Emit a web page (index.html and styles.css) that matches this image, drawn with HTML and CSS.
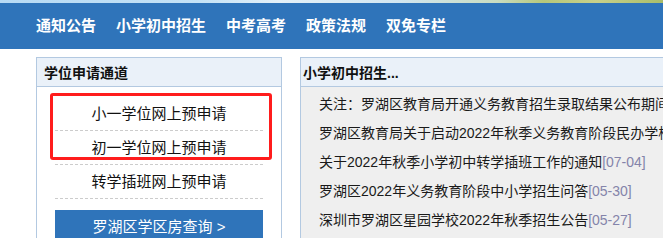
FILE: index.html
```html
<!DOCTYPE html>
<html lang="zh-CN">
<head>
<meta charset="utf-8">
<title>学位申请</title>
<link rel="stylesheet" href="styles.css">
</head>
<body>
<div class="banner"></div>
<nav class="nav">
  <a class="nav-item">通知公告</a>
  <a class="nav-item">小学初中招生</a>
  <a class="nav-item">中考高考</a>
  <a class="nav-item">政策法规</a>
  <a class="nav-item">双免专栏</a>
</nav>
<main class="content">
  <section class="panel panel-left">
    <h2 class="panel-head">学位申请通道</h2>
    <div class="panel-body left-body">
      <a class="apply-row">小一学位网上预申请</a>
      <a class="apply-row">初一学位网上预申请</a>
      <a class="apply-row">转学插班网上预申请</a>
      <a class="house-btn">罗湖区学区房查询 &gt;</a>
      <div class="highlight"></div>
    </div>
  </section>
  <section class="panel panel-right">
    <h2 class="panel-head">小学初中招生...</h2>
    <ul class="panel-body news">
      <li>关注：罗湖区教育局开通义务教育招生录取结果公布期间咨询电话<span class="date">[07-20]</span></li>
      <li>罗湖区教育局关于启动2022年秋季义务教育阶段民办学校学位补贴申请的通知<span class="date">[07-08]</span></li>
      <li>关于2022年秋季小学初中转学插班工作的通知<span class="date">[07-04]</span></li>
      <li>罗湖区2022年义务教育阶段中小学招生问答<span class="date">[05-30]</span></li>
      <li>深圳市罗湖区星园学校2022年秋季招生公告<span class="date">[05-27]</span></li>
    </ul>
  </section>
</main>
</body>
</html>
```
FILE: styles.css
```css
html, body {
  margin: 0;
  padding: 0;
  background: #ffffff;
  overflow: hidden;
  font-family: "Liberation Sans", "Noto Sans CJK SC", sans-serif;
}

.banner {
  height: 3px;
  background: linear-gradient(90deg, #b7daf4 0%, #c4e2f6 30%, #e3f0f8 42%, #d2e6f1 60%, #c9dcc0 75%, #b6c77a 82%, #c8d08a 90%, #a9bd6a 100%);
}

.nav {
  height: 46px;
  background: #2f74ba;
  display: flex;
  align-items: center;
  gap: 20px;
  padding-left: 36px;
}

.nav-item {
  color: #ffffff;
  font-size: 15px;
  font-weight: bold;
  line-height: 20px;
  white-space: nowrap;
}

.content {
  display: flex;
  align-items: flex-start;
  gap: 18px;
  padding: 8px 0 0 36px;
  width: 1000px;
}

.panel {
  border: 1px solid #b3c9e1;
  border-bottom: none;
  flex: none;
}

.panel-left {
  width: 244px;
  background: #ffffff;
}

.panel-right {
  width: 460px;
  background: #efefef;
}

.panel-head {
  margin: 0;
  height: 28px;
  line-height: 30px;
  padding-left: 7px;
  font-size: 14px;
  font-weight: bold;
  color: #111111;
  background: #eaf1f9;
  border-bottom: 1px solid #b3c9e1;
  white-space: nowrap;
}

.panel-right .panel-head {
  padding-left: 2px;
}

.left-body {
  position: relative;
  padding: 10px 18px 20px;
  display: flex;
  flex-direction: column;
}

.apply-row {
  display: block;
  height: 33px;
  line-height: 34px;
  text-align: center;
  font-size: 15px;
  color: #111111;
  border-bottom: 1px dashed #cccccc;
  white-space: nowrap;
}

.house-btn {
  display: block;
  margin-top: 11px;
  height: 34px;
  line-height: 34px;
  text-align: center;
  background: #2f74ba;
  color: #ffffff;
  font-size: 15px;
  white-space: nowrap;
}

.highlight {
  position: absolute;
  left: 13px;
  top: 6px;
  width: 216px;
  height: 61px;
  border: 3px solid #ff1c1c;
  border-radius: 3px;
}

.news {
  list-style: none;
  margin: 0;
  padding: 3px 0 10px 18px;
  overflow: hidden;
}

.news li {
  height: 29px;
  line-height: 29px;
  font-size: 14px;
  color: #1a1a1a;
  white-space: nowrap;
}

.date {
  color: #8484aa;
}
```
